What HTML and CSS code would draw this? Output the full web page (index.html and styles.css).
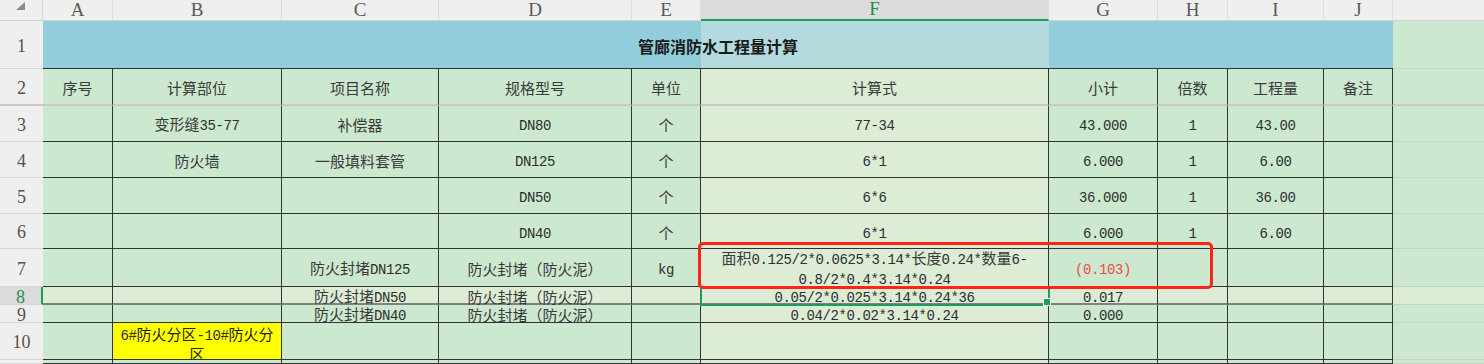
FILE: index.html
```html
<!DOCTYPE html>
<html lang="zh-CN">
<head>
<meta charset="utf-8">
<title>管廊消防水工程量计算</title>
<link rel="stylesheet" href="styles.css">
</head>
<body>
<div class="sheet">
  <!-- column header row -->
  <div class="corner"><svg width="11" height="9" viewBox="0 0 11 9"><polygon points="10,0 10,8 1,8" fill="#8a8a8a"/></svg></div>
  <div class="ch">A</div>
  <div class="ch">B</div>
  <div class="ch">C</div>
  <div class="ch">D</div>
  <div class="ch">E</div>
  <div class="ch sel">F</div>
  <div class="ch">G</div>
  <div class="ch">H</div>
  <div class="ch">I</div>
  <div class="ch">J</div>
  <div class="ch last"></div>

  <!-- row 1 -->
  <div class="rh">1</div>
  <div class="title"><span class="t">管廊消防水工程量计算</span></div>
  <div class="k"></div>

  <!-- row 2 -->
  <div class="rh fz">2</div>
  <div class="c fz"><span class="t">序号</span></div>
  <div class="c fz"><span class="t">计算部位</span></div>
  <div class="c fz"><span class="t">项目名称</span></div>
  <div class="c fz"><span class="t">规格型号</span></div>
  <div class="c fz"><span class="t">单位</span></div>
  <div class="c fz l"><span class="t">计算式</span></div>
  <div class="c fz"><span class="t">小计</span></div>
  <div class="c fz"><span class="t">倍数</span></div>
  <div class="c fz"><span class="t">工程量</span></div>
  <div class="c fz"><span class="t">备注</span></div>
  <div class="k fz"></div>

  <!-- row 3 -->
  <div class="rh">3</div>
  <div class="c"></div>
  <div class="c"><span class="t">变形缝<span class="m">35-77</span></span></div>
  <div class="c"><span class="t">补偿器</span></div>
  <div class="c"><span class="t"><span class="m">DN80</span></span></div>
  <div class="c"><span class="t">个</span></div>
  <div class="c l"><span class="t"><span class="m">77-34</span></span></div>
  <div class="c"><span class="t"><span class="m">43.000</span></span></div>
  <div class="c"><span class="t"><span class="m">1</span></span></div>
  <div class="c"><span class="t"><span class="m">43.00</span></span></div>
  <div class="c"></div>
  <div class="k"></div>

  <!-- row 4 -->
  <div class="rh">4</div>
  <div class="c"></div>
  <div class="c"><span class="t">防火墙</span></div>
  <div class="c"><span class="t">一般填料套管</span></div>
  <div class="c"><span class="t"><span class="m">DN125</span></span></div>
  <div class="c"><span class="t">个</span></div>
  <div class="c l"><span class="t"><span class="m">6*1</span></span></div>
  <div class="c"><span class="t"><span class="m">6.000</span></span></div>
  <div class="c"><span class="t"><span class="m">1</span></span></div>
  <div class="c"><span class="t"><span class="m">6.00</span></span></div>
  <div class="c"></div>
  <div class="k"></div>

  <!-- row 5 -->
  <div class="rh">5</div>
  <div class="c"></div>
  <div class="c"></div>
  <div class="c"></div>
  <div class="c"><span class="t"><span class="m">DN50</span></span></div>
  <div class="c"><span class="t">个</span></div>
  <div class="c l"><span class="t"><span class="m">6*6</span></span></div>
  <div class="c"><span class="t"><span class="m">36.000</span></span></div>
  <div class="c"><span class="t"><span class="m">1</span></span></div>
  <div class="c"><span class="t"><span class="m">36.00</span></span></div>
  <div class="c"></div>
  <div class="k"></div>

  <!-- row 6 -->
  <div class="rh">6</div>
  <div class="c"></div>
  <div class="c"></div>
  <div class="c"></div>
  <div class="c"><span class="t"><span class="m">DN40</span></span></div>
  <div class="c"><span class="t">个</span></div>
  <div class="c l"><span class="t"><span class="m">6*1</span></span></div>
  <div class="c"><span class="t"><span class="m">6.000</span></span></div>
  <div class="c"><span class="t"><span class="m">1</span></span></div>
  <div class="c"><span class="t"><span class="m">6.00</span></span></div>
  <div class="c"></div>
  <div class="k"></div>

  <!-- row 7 -->
  <div class="rh">7</div>
  <div class="c"></div>
  <div class="c"></div>
  <div class="c"><span class="t">防火封堵<span class="m">DN125</span></span></div>
  <div class="c"><span class="t">防火封堵（防火泥）</span></div>
  <div class="c"><span class="t"><span class="m">kg</span></span></div>
  <div class="c l"><span class="t">面积<span class="m">0.125/2*0.0625*3.14*</span>长度<span class="m">0.24*</span>数量<span class="m">6-</span><br><span class="m">0.8/2*0.4*3.14*0.24</span></span></div>
  <div class="c red"><span class="t"><span class="m">(0.103)</span></span></div>
  <div class="c"></div>
  <div class="c"></div>
  <div class="c"></div>
  <div class="k"></div>

  <!-- row 8 (selected row) -->
  <div class="rh sel">8</div>
  <div class="c l r8"></div>
  <div class="c l r8"></div>
  <div class="c l r8"><span class="t">防火封堵<span class="m">DN50</span></span></div>
  <div class="c l r8"><span class="t">防火封堵（防火泥）</span></div>
  <div class="c l r8"></div>
  <div class="c l r8 sel"><span class="t"><span class="m">0.05/2*0.025*3.14*0.24*36</span></span></div>
  <div class="c l r8"><span class="t"><span class="m">0.017</span></span></div>
  <div class="c l r8"></div>
  <div class="c l r8"></div>
  <div class="c l r8"></div>
  <div class="k l"></div>

  <!-- row 9 -->
  <div class="rh">9</div>
  <div class="c"></div>
  <div class="c"></div>
  <div class="c"><span class="t">防火封堵<span class="m">DN40</span></span></div>
  <div class="c"><span class="t">防火封堵（防火泥）</span></div>
  <div class="c"></div>
  <div class="c l"><span class="t"><span class="m">0.04/2*0.02*3.14*0.24</span></span></div>
  <div class="c"><span class="t"><span class="m">0.000</span></span></div>
  <div class="c"></div>
  <div class="c"></div>
  <div class="c"></div>
  <div class="k"></div>

  <!-- row 10 -->
  <div class="rh">10</div>
  <div class="c"></div>
  <div class="c yellow"><span class="t"><span class="m">6#</span>防火分区<span class="m">-10#</span>防火分<br>区</span></div>
  <div class="c"></div>
  <div class="c"></div>
  <div class="c"></div>
  <div class="c l"></div>
  <div class="c"></div>
  <div class="c"></div>
  <div class="c"></div>
  <div class="c"></div>
  <div class="k"></div>

  <!-- row 11 (partially visible) -->
  <div class="rh"></div>
  <div class="c"></div>
  <div class="c"></div>
  <div class="c"></div>
  <div class="c"></div>
  <div class="c"></div>
  <div class="c l"></div>
  <div class="c"></div>
  <div class="c"></div>
  <div class="c"></div>
  <div class="c"></div>
  <div class="k"></div>

  <div class="mark"></div>
</div>
</body>
</html>
```

FILE: styles.css
```css
* { box-sizing: border-box; }
html, body { margin: 0; padding: 0; }
body {
  width: 1484px;
  height: 364px;
  overflow: hidden;
  background: #ffffff;
  font-family: "Noto Sans CJK SC", sans-serif;
}

.sheet {
  position: relative;
  display: grid;
  grid-template-columns: 43px 70px 169px 157px 193px 69px 348px 109px 70px 96px 69px 91px;
  grid-template-rows: 21px 48px 37px 36px 36px 36px 35px 38px 18px 18px 37px 4px;
}

/* top-left corner */
.corner {
  background: #efefef;
  border-right: 1px solid #dadada;
  border-bottom: 1px solid #d2d2d2;
  padding: 2px 0 0 15px;
}
.corner svg { display: block; }

/* column headers */
.ch {
  background: #efefef;
  border-right: 1px solid #dcdcdc;
  border-bottom: 1px solid #d2d2d2;
  font-family: "Liberation Serif", serif;
  font-size: 19px;
  line-height: 1;
  color: #5a5a5a;
  display: flex;
  justify-content: center;
  align-items: center;
  padding-bottom: 2px;
}
.ch.sel {
  background: #dcdcdc;
  border-bottom: 2px solid #1f9c5a;
  color: #1f8c55;
}
.ch.last { border-right: none; }

/* row headers */
.rh {
  background: #efefef;
  border-bottom: 1px solid #d6d6d6;
  font-family: "Liberation Serif", serif;
  font-size: 18px;
  line-height: 1;
  color: #5b5048;
  display: flex;
  justify-content: center;
  align-items: center;
  padding-top: 2px;
}
.rh.fz { border-bottom: 2px solid #c9c9c9; }
.rh.sel {
  background: #dbdbdb;
  border-right: 2px solid #1f9c5a;
  color: #1f8c55;
}

/* merged title */
.title {
  grid-column: span 10;
  background: linear-gradient(to right, #92cddc 0, #92cddc 658px, #b4dadd 658px, #b4dadd 1006px, #92cddc 1006px);
  border-bottom: 1px solid #333333;
  display: flex;
  justify-content: center;
  align-items: center;
  font-weight: 700;
  font-size: 16px;
  color: #1a1a1a;
  padding-top: 3px;
}

/* data cells */
.c {
  background: #cce8cf;
  border-right: 1px solid #333333;
  border-bottom: 1px solid #333333;
  display: flex;
  align-items: center;
  justify-content: center;
  text-align: center;
  font-size: 15px;
  line-height: 18px;
  color: #3a3a3a;
  padding-top: 3px;
  white-space: nowrap;
}
.t { display: block; }
.c.l { background: #dcecd5; }
.c.fz { border-bottom: 2px solid #c9c9c9; }
.c.r8 { border-bottom: 2px solid #808080; }
.c.red { color: #f04848; }
.c.yellow {
  background: #ffff00;
  color: #222222;
  align-items: flex-start;
  padding-top: 2px;
}
.c.sel {
  position: relative;
  outline: 2px solid #1f9c5a;
  outline-offset: -1px;
}
.c.sel::after {
  content: "";
  position: absolute;
  right: -3px;
  bottom: -3px;
  width: 6px;
  height: 6px;
  background: #1f9c5a;
  border: 1px solid #ffffff;
}

/* cells beyond column J */
.k {
  background: #cce8cf;
  border-bottom: 1px solid #c3d4c6;
}
.k.l { background: #dcecd5; }
.k.fz { border-bottom: 2px solid #c9c9c9; }

.m {
  font-family: "Liberation Mono", monospace;
  font-size: 14px;
  letter-spacing: -0.4px;
  color: #2e2e2e;
}
.c.red .m { color: #f04848; }

/* red annotation rectangle drawn over the sheet */
.mark {
  position: absolute;
  left: 698px;
  top: 242px;
  width: 515px;
  height: 47px;
  border: 3px solid #ff2418;
  border-radius: 5px;
  pointer-events: none;
}
```
